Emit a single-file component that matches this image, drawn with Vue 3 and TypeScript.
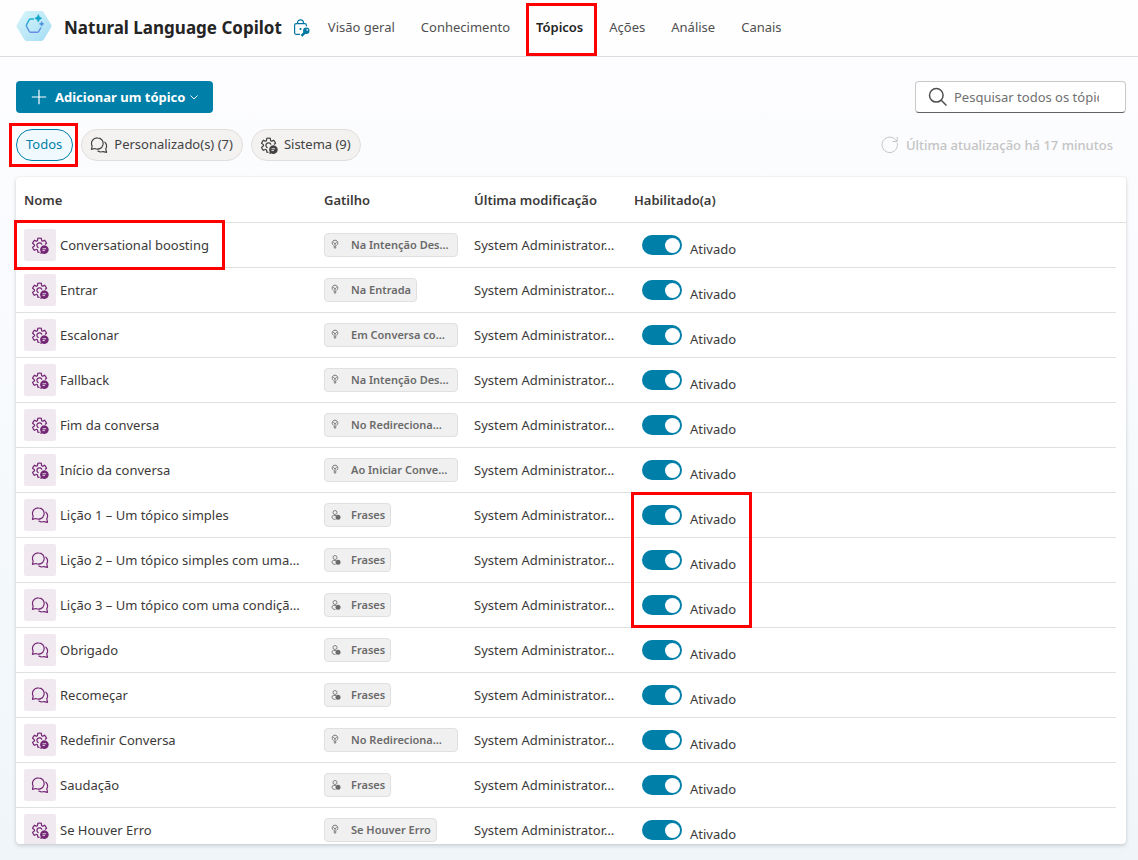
<script setup lang="ts">
import { ref } from 'vue'

type Kind = 'system' | 'custom'
interface Topic {
  name: string
  kind: Kind
  trigger: string
  enabled: boolean
}

const tabs = ['Visão geral', 'Conhecimento', 'Tópicos', 'Ações', 'Análise', 'Canais']
const activeTab = 'Tópicos'
const search = ref('')
const modified = 'System Administrator…'

const topics = ref<Topic[]>([
  { name: 'Conversational boosting', kind: 'system', trigger: 'Na Intenção Des…', enabled: true },
  { name: 'Entrar', kind: 'system', trigger: 'Na Entrada', enabled: true },
  { name: 'Escalonar', kind: 'system', trigger: 'Em Conversa co…', enabled: true },
  { name: 'Fallback', kind: 'system', trigger: 'Na Intenção Des…', enabled: true },
  { name: 'Fim da conversa', kind: 'system', trigger: 'No Redireciona…', enabled: true },
  { name: 'Início da conversa', kind: 'system', trigger: 'Ao Iniciar Conve…', enabled: true },
  { name: 'Lição 1 – Um tópico simples', kind: 'custom', trigger: 'Frases', enabled: true },
  { name: 'Lição 2 – Um tópico simples com uma…', kind: 'custom', trigger: 'Frases', enabled: true },
  { name: 'Lição 3 – Um tópico com uma condiçã…', kind: 'custom', trigger: 'Frases', enabled: true },
  { name: 'Obrigado', kind: 'custom', trigger: 'Frases', enabled: true },
  { name: 'Recomeçar', kind: 'custom', trigger: 'Frases', enabled: true },
  { name: 'Redefinir Conversa', kind: 'system', trigger: 'No Redireciona…', enabled: true },
  { name: 'Saudação', kind: 'custom', trigger: 'Frases', enabled: true },
  { name: 'Se Houver Erro', kind: 'system', trigger: 'Se Houver Erro', enabled: true },
])
</script>

<template>
  <div class="page">
    <svg class="defs" width="0" height="0" aria-hidden="true">
      <symbol id="gear" viewBox="0 0 20 20">
        <g fill="none" stroke="currentColor" stroke-width="1.4">
          <path d="M9.500 18.100 7.700 17.900 7.200 15.700a1 1 0 0 0-1.300-.7l-2.200.8a8.300 8.300 0 0 1-1.900-3.200l1.800-1.500a1 1 0 0 0 0-1.500L1.800 8a8.300 8.300 0 0 1 1.900-3.200l2.200.8a1 1 0 0 0 1.300-.8l.4-2.300a8.300 8.300 0 0 1 3.800 0l.4 2.300a1 1 0 0 0 1.300.8l2.200-.8A8.300 8.300 0 0 1 17.200 8l-1.600 1.400" />
          <path d="M8.500 13A2.800 2.800 0 1 1 12.100 9.700" />
        </g>
        <path fill="currentColor" d="M14.800 10.400a4.800 4.800 0 1 1-2.100 9.100l-2.400.4.500-2.300a4.800 4.800 0 0 1 4-7.200Z" />
        <path class="badge-lines" d="M12.800 14.200h4M12.800 16.200h2.600" fill="none" stroke-width="1" />
      </symbol>
      <symbol id="chat" viewBox="0 0 20 20">
        <g fill="none" stroke="currentColor" stroke-width="1.300" stroke-linejoin="round" stroke-linecap="round">
          <path d="M8.300 2a6.300 6.300 0 1 1-2.900 11.900L1.600 14.800l.8-3.600A6.300 6.300 0 0 1 8.300 2Z" />
          <path d="M8.800 16.800a6.300 6.300 0 0 0 5.600.5l4 .9-.9-3.900A6.300 6.300 0 0 0 16.500 6.800" />
        </g>
      </symbol>
      <symbol id="bulb" viewBox="0 0 8 12">
        <path d="M2.600 6.400A2.800 2.800 0 1 1 5.400 6.400M2.300 3.300 4 4.800l1.700-1.500M4 4.800v5M2.600 8h2.800" fill="none" stroke="currentColor" stroke-width=".9" />
      </symbol>
      <symbol id="phrase" viewBox="0 0 10 12">
        <circle cx="4" cy="3.500" r="2" fill="none" stroke="currentColor" stroke-width=".8" />
        <path d="M5 6.500H2.500A1.500 1.500 0 0 0 1 8c0 1.700 1.500 2.500 3.500 2.500" fill="none" stroke="currentColor" stroke-width=".8" />
        <circle cx="7" cy="8.300" r="2.500" fill="currentColor" />
      </symbol>
    </svg>

    <header class="topbar">
      <svg class="logo" width="36" height="32" viewBox="0 0 36 32" aria-hidden="true">
        <defs>
          <linearGradient id="hexFill" x1="0" y1="0" x2="1" y2="1">
            <stop offset="0" stop-color="#d8f6fa" />
            <stop offset="1" stop-color="#a4dcf5" />
          </linearGradient>
          <linearGradient id="hexLine" x1="0" y1="0" x2="0" y2="1">
            <stop offset="0" stop-color="#1bb3d2" />
            <stop offset="1" stop-color="#6a8ce6" />
          </linearGradient>
        </defs>
        <path d="M10.500 1h15q1.500 0 2.300 1.400l7.400 12.400q.6 1.200 0 2.400l-7.400 12.400Q27 31 25.500 31h-15q-1.500 0-2.300-1.400L.8 17.200q-.6-1.200 0-2.400L8.200 2.400Q9 1 10.500 1Z" fill="url(#hexFill)" />
        <path d="M18 9h-3.500q-.8 0-1.200.7l-2.700 5q-.5.9 0 1.800l2.700 5q.4.700 1.200.7h7q.8 0 1.200-.7l2.300-4" fill="none" stroke="url(#hexLine)" stroke-width="1.500" />
        <path d="M22.300 4.500q.6 3.200 3.500 3.800-2.900.6-3.500 3.700-.6-3.100-3.500-3.700 2.900-.6 3.500-3.800Z" fill="#12a5c8" stroke="#12a5c8" stroke-width=".6" />
        <path d="M25.700 11.500q.3 2 2.200 2.400-1.900.4-2.200 2.400-.4-2-2.300-2.400 1.900-.4 2.300-2.400Z" fill="#4a91de" stroke="#4a91de" stroke-width=".5" />
      </svg>
      <h1>Natural Language Copilot</h1>
      <svg class="lock" width="16" height="18" viewBox="0 0 16 18" fill="none" stroke="#0078a3" stroke-width="1.200" aria-hidden="true">
        <path d="M6 15.400H2.200A1.600 1.600 0 0 1 .6 13.800V6.200c0-.9.7-1.600 1.600-1.600h8.600c.9 0 1.600.7 1.600 1.600v1M3.500 4.600V3.800a3 3 0 0 1 6 0v.8" />
        <circle cx="6.500" cy="10" r=".5" fill="#0078a3" />
        <path d="M7.500 16.800 11 13.300" stroke-width="2.400" />
        <circle cx="12.300" cy="11.800" r="2.600" fill="#0078a3" />
        <circle cx="13.200" cy="10.900" r=".8" fill="#fff" stroke="none" />
      </svg>
      <nav>
        <a v-for="tab in tabs" :key="tab" href="#" :class="{ active: tab === activeTab }">
          {{ tab }}<span v-if="tab === activeTab" class="mark mark-tab"></span>
        </a>
      </nav>
    </header>

    <main>
      <div class="toolbar">
        <button class="primary" type="button">
          <svg width="16" height="16" viewBox="0 0 16 16" aria-hidden="true"><path d="M8 .8v14.400M.8 8h14.400" stroke="#fff" stroke-width="1.200" /></svg>
          <span>Adicionar um tópico</span>
          <svg width="8" height="6" viewBox="0 0 8 6" aria-hidden="true"><path d="M.5 1.500 4 5 7.500 1.500" fill="none" stroke="#fff" stroke-width=".9" /></svg>
        </button>
        <label class="search">
          <svg width="20" height="20" viewBox="0 0 20 20" fill="none" stroke="#505050" stroke-width="1.500" aria-hidden="true"><circle cx="8.300" cy="8.300" r="6.800" /><path d="m13.200 13.200 5.300 5.300" /></svg>
          <input v-model="search" type="text" placeholder="Pesquisar todos os tópicos" aria-label="Pesquisar todos os tópicos" />
        </label>
      </div>

      <div class="filters">
        <button type="button" class="pill selected">Todos<span class="mark mark-pill"></span></button>
        <button type="button" class="pill">
          <svg width="18" height="18" aria-hidden="true"><use href="#chat" /></svg>Personalizado(s) (7)
        </button>
        <button type="button" class="pill">
          <svg width="18" height="18" aria-hidden="true"><use href="#gear" /></svg>Sistema (9)
        </button>
        <button type="button" class="refresh" disabled>
          <svg width="18" height="18" viewBox="0 0 18 18" fill="none" stroke="#c4c4c4" aria-hidden="true"><path d="M16.200 7A7.700 7.700 0 1 1 13.500 2.800L16 5.200M16.200.8v4.700h-4.700" /></svg>
          Última atualização há 17 minutos
        </button>
      </div>

      <div class="list">
        <div class="card">
          <table>
            <thead>
              <tr>
                <th scope="col">Nome</th>
                <th scope="col">Gatilho</th>
                <th scope="col">Última modificação</th>
                <th scope="col">Habilitado(a)</th>
              </tr>
            </thead>
            <tbody>
              <tr v-for="(topic, i) in topics" :key="topic.name">
                <td class="name">
                  <span class="tile">
                    <svg width="18" height="18" aria-hidden="true"><use :href="topic.kind === 'system' ? '#gear' : '#chat'" /></svg>
                  </span>
                  <span class="text">{{ topic.name }}</span>
                </td>
                <td>
                  <span class="chip" :class="{ full: topic.trigger.endsWith('…') }">
                    <svg v-if="topic.kind === 'system'" width="8" height="12" aria-hidden="true"><use href="#bulb" /></svg>
                    <svg v-else width="10" height="12" aria-hidden="true"><use href="#phrase" /></svg>
                    <span>{{ topic.trigger }}</span>
                  </span>
                </td>
                <td><span class="text">{{ modified }}</span></td>
                <td class="state">
                  <input :id="'topic-' + i" v-model="topic.enabled" type="checkbox" role="switch" />
                  <label :for="'topic-' + i">{{ topic.enabled ? 'Ativado' : 'Desativado' }}</label>
                </td>
              </tr>
            </tbody>
          </table>
        </div>
        <span class="mark mark-name"></span>
        <span class="mark mark-state"></span>
      </div>
    </main>
  </div>
</template>

<style>
body {
  margin: 0;
}
</style>

<style scoped>
.page {
  display: flex;
  flex-direction: column;
  height: 100vh;
  box-sizing: border-box;
  overflow: hidden;
  color: #3b3a39;
  font: 13px/20px "Noto Sans", "Open Sans", sans-serif;
  background: linear-gradient(180deg, #fdfdfe 0%, #fafbfe 30%, #f3f8fb 75%, #eff5f9 100%);
}
.defs {
  position: absolute;
}
button,
input {
  font: inherit;
  color: inherit;
}
.mark {
  position: absolute;
  box-sizing: border-box;
  border: 3px solid #f00;
  pointer-events: none;
}
.topbar {
  display: flex;
  align-items: center;
  flex: none;
  height: 56px;
  padding: 0 16px;
  background: #fefefe;
  border-bottom: 1px solid #dcdcdc;
}
.logo {
  margin: 0 12px 4px 0;
}
h1 {
  margin: 0;
  color: #242424;
  font-size: 17px;
  font-weight: 700;
  line-height: 24px;
  white-space: nowrap;
}
.lock {
  margin-left: 12px;
}
nav {
  display: flex;
  gap: 26px;
  margin-left: 18px;
  padding-bottom: 2px;
}
nav a {
  position: relative;
  color: #505050;
  text-decoration: none;
  white-space: nowrap;
}
nav a.active {
  color: #242424;
  font-weight: 600;
}
.mark-tab {
  inset: -14px -14px -19px -10px;
}
main {
  display: flex;
  flex-direction: column;
  flex: 1;
  min-height: 0;
  padding: 24px 12px 16px 16px;
}
.toolbar,
.filters {
  display: flex;
  align-items: center;
  flex: none;
  height: 32px;
  margin-bottom: 16px;
}
.toolbar {
  justify-content: space-between;
}
.primary {
  display: flex;
  align-items: center;
  height: 32px;
  padding: 0 15px;
  border: 0;
  border-radius: 4px;
  background: #007fa8;
  color: #fff;
  font-weight: 700;
}
.primary span {
  margin: 0 5px 0 8px;
}
.search {
  display: flex;
  align-items: center;
  gap: 6px;
  width: 211px;
  height: 32px;
  box-sizing: border-box;
  padding: 0 26px 0 12px;
  border: 1px solid #c8c8c8;
  border-bottom-color: #616161;
  border-radius: 4px;
  background: #fff;
}
.search svg {
  flex: none;
}
.search input {
  flex: 1;
  min-width: 0;
  padding: 0;
  border: 0;
  outline: 0;
  background: none;
}
.search input::placeholder {
  color: #707070;
  opacity: 1;
}
.filters {
  gap: 8px;
}
.pill {
  position: relative;
  display: flex;
  align-items: center;
  gap: 6px;
  height: 32px;
  padding: 0 9px 2px 8px;
  border: 1px solid #e1dfdd;
  border-radius: 16px;
  background: #f3f2f1;
  color: #424242;
  white-space: nowrap;
}
.pill svg {
  margin-top: 2px;
}
.pill.selected {
  padding: 0 10px 2px 9px;
  border-color: #007fa8;
  background: #f0fafe;
  color: #007fa8;
}
.mark-pill {
  inset: -7px -6px -7px -8px;
}
.refresh {
  display: flex;
  align-items: center;
  gap: 7px;
  margin: 0 13px 0 auto;
  padding: 0;
  border: 0;
  background: none;
  color: #c4c4c4;
  font-weight: 500;
}
.badge-lines {
  stroke: #f3eef3;
}
.list {
  position: relative;
  flex: 1;
  min-height: 0;
}
.card {
  height: 100%;
  overflow: hidden;
  border-radius: 4px;
  background: #fff;
  box-shadow: 0 2px 4px rgba(0, 0, 0, 0.14), 0 0 2px rgba(0, 0, 0, 0.1);
}
table,
thead,
tbody {
  display: block;
}
tr {
  display: grid;
  grid-template-columns: 300px 150px 160px 1fr;
  height: 45px;
  box-sizing: border-box;
  border-bottom: 1px solid #e0e0e0;
}
thead tr {
  height: 46px;
}
tbody tr {
  margin-right: 10px;
}
th,
td {
  display: flex;
  align-items: center;
  min-width: 0;
  padding: 0 8px;
  text-align: left;
}
th {
  font-weight: 600;
}
.tile {
  display: flex;
  align-items: center;
  justify-content: center;
  flex: none;
  width: 32px;
  height: 32px;
  margin-right: 4px;
  border-radius: 2px;
  background: #f0e9f0;
  color: #742774;
}
.text {
  white-space: nowrap;
}
.chip {
  display: flex;
  align-items: center;
  box-sizing: border-box;
  height: 24px;
  padding: 0 5px 0 6px;
  border: 1px solid #e0e0e0;
  border-radius: 4px;
  background: #f0f0f0;
  color: #6a6a6a;
  font-size: 11px;
  font-weight: 600;
  white-space: nowrap;
}
.chip.full {
  width: 134px;
}
.chip svg {
  flex: none;
  margin-right: 12px;
}
.chip svg[width="10"] {
  margin-right: 10px;
}
.state {
  padding-left: 16px;
}
.state input {
  display: flex;
  align-items: center;
  justify-content: flex-end;
  appearance: none;
  width: 40px;
  height: 20px;
  margin: 0 8px 0 0;
  padding: 0 2px;
  box-sizing: border-box;
  border-radius: 10px;
  background: #8a8886;
}
.state input:checked {
  background: #007fa8;
}
.state input::before {
  content: "";
  width: 15px;
  height: 15px;
  border-radius: 50%;
  background: #fff;
}
.state input:not(:checked) {
  justify-content: flex-start;
}
.state label {
  padding-top: 8px;
}
.mark-name {
  top: 43px;
  left: -2px;
  width: 211px;
  height: 50px;
}
.mark-state {
  top: 315px;
  left: 615px;
  width: 121px;
  height: 136px;
}
</style>
